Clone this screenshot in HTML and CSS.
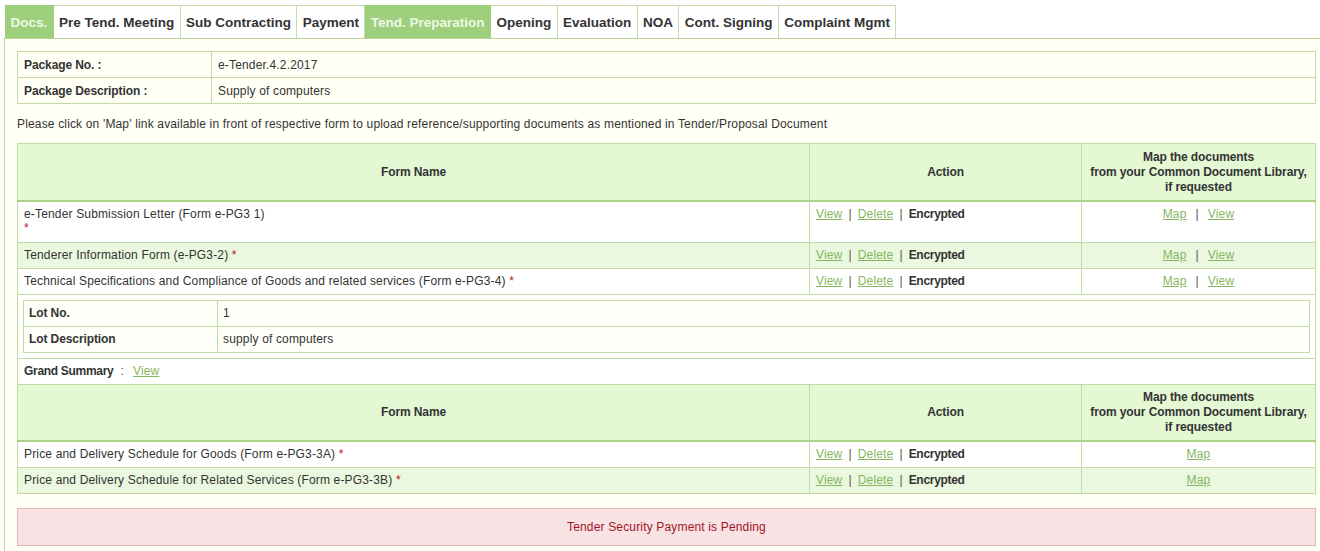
FILE: index.html
```html
<!DOCTYPE html>
<html lang="en">
<head>
  <meta charset="UTF-8">
  <title>Tender Preparation</title>
  <link rel="stylesheet" href="styles.css">
</head>
<body>
  <ul class="tabs">
    <li class="active">Docs.</li>
    <li>Pre Tend. Meeting</li>
    <li>Sub Contracting</li>
    <li>Payment</li>
    <li class="active">Tend. Preparation</li>
    <li>Opening</li>
    <li>Evaluation</li>
    <li>NOA</li>
    <li>Cont. Signing</li>
    <li>Complaint Mgmt</li>
  </ul>

  <div class="content">
    <table class="info">
      <tr><td class="lbl">Package No. :</td><td>e-Tender.4.2.2017</td></tr>
      <tr><td class="lbl">Package Description :</td><td>Supply of computers</td></tr>
    </table>

    <p class="note">Please click on 'Map' link available in front of respective form to upload reference/supporting documents as mentioned in Tender/Proposal Document</p>

    <table class="forms">
      <tr class="head">
        <th class="c-name">Form Name</th>
        <th class="c-act">Action</th>
        <th class="c-map">Map the documents<br>from your Common Document Library,<br>if requested</th>
      </tr>
      <tr class="tall">
        <td>e-Tender Submission Letter (Form e-PG3 1)<br><span class="req">*</span></td>
        <td><a href="#">View</a><span class="sep">|</span><a href="#">Delete</a><span class="sep">|</span><b>Encrypted</b></td>
        <td class="center"><a href="#">Map</a><span class="sep wide">|</span><a href="#">View</a></td>
      </tr>
      <tr class="alt">
        <td>Tenderer Information Form (e-PG3-2) <span class="req">*</span></td>
        <td><a href="#">View</a><span class="sep">|</span><a href="#">Delete</a><span class="sep">|</span><b>Encrypted</b></td>
        <td class="center"><a href="#">Map</a><span class="sep wide">|</span><a href="#">View</a></td>
      </tr>
      <tr>
        <td>Technical Specifications and Compliance of Goods and related services (Form e-PG3-4) <span class="req">*</span></td>
        <td><a href="#">View</a><span class="sep">|</span><a href="#">Delete</a><span class="sep">|</span><b>Encrypted</b></td>
        <td class="center"><a href="#">Map</a><span class="sep wide">|</span><a href="#">View</a></td>
      </tr>
      <tr class="lot">
        <td colspan="3">
          <table class="info lot-info">
            <tr><td class="lbl">Lot No.</td><td>1</td></tr>
            <tr><td class="lbl">Lot Description</td><td>supply of computers</td></tr>
          </table>
        </td>
      </tr>
      <tr>
        <td colspan="3"><b>Grand Summary</b><span class="sep colon">:</span><a href="#">View</a></td>
      </tr>
      <tr class="head short">
        <th class="c-name">Form Name</th>
        <th class="c-act">Action</th>
        <th class="c-map">Map the documents<br>from your Common Document Library,<br>if requested</th>
      </tr>
      <tr>
        <td>Price and Delivery Schedule for Goods (Form e-PG3-3A) <span class="req">*</span></td>
        <td><a href="#">View</a><span class="sep">|</span><a href="#">Delete</a><span class="sep">|</span><b>Encrypted</b></td>
        <td class="center"><a href="#">Map</a></td>
      </tr>
      <tr class="alt">
        <td>Price and Delivery Schedule for Related Services (Form e-PG3-3B) <span class="req">*</span></td>
        <td><a href="#">View</a><span class="sep">|</span><a href="#">Delete</a><span class="sep">|</span><b>Encrypted</b></td>
        <td class="center"><a href="#">Map</a></td>
      </tr>
    </table>

    <div class="alert">Tender Security Payment is Pending</div>
  </div>
</body>
</html>
```

FILE: styles.css
```css
body {
  font-family: "Liberation Sans", Arial, sans-serif;
  font-size: 12px;
  letter-spacing: 0.16px;
  color: #333;
  margin: 0;
  padding-top: 5px;
  background-color: #fff;
  overflow: hidden;
}

b, th, .lbl {
  letter-spacing: -0.1px;
}

.tabs {
  list-style: none;
  margin: 0 0 0 5px;
  padding: 0;
  display: flex;
}

.tabs li {
  height: 33px;
  line-height: 33px;
  padding: 0 5.4px;
  font-size: 13.5px;
  font-weight: bold;
  letter-spacing: 0;
  color: #333;
  border-top: 1px solid #c6dcab;
  border-right: 1px solid #c6dcab;
  box-sizing: border-box;
  background-color: #fff;
}

.tabs li.active {
  background-color: #9dcf7d;
  color: #eef8e6;
  border-color: #9dcf7d;
}

.content {
  margin-left: 4px;
  width: 1340px;
  border-left: 1px solid #b9d49c;
  border-top: 1px solid #b9d49c;
  background-color: #fffff6;
  padding: 12px 0 6px 12px;
  box-sizing: border-box;
  height: 520px;
}

table {
  border-collapse: collapse;
  width: 1299px;
}

td, th {
  border: 1px solid #c2dba5;
  padding: 0 6px;
  text-align: left;
  vertical-align: middle;
}

.info td {
  height: 25px;
  background-color: #fffff6;
}

.info .lbl {
  width: 181px;
  font-weight: bold;
}

.note {
  margin: 13px 0 12px 0;
  line-height: 14px;
}

.forms > tbody > tr > td {
  height: 25px;
  background-color: #fff;
}

.forms > tbody > tr.alt > td {
  background-color: #e9f8de;
}

.forms > tbody > tr.tall > td {
  height: 41px;
  vertical-align: top;
  padding-top: 5px;
  box-sizing: border-box;
}

.forms tr.head th {
  background-color: #e3f8d3;
  height: 56px;
  text-align: center;
  font-weight: bold;
  line-height: 15px;
  border-bottom: 2px solid #a9d286;
}

.forms tr.head.short th {
  height: 55px;
}

.c-name { width: 779px; }
.c-act { width: 259px; }

.forms .center {
  text-align: center;
}

.forms > tbody > tr.lot > td {
  padding: 5px;
  height: auto;
}

.lot-info {
  width: 1287px;
}

.lot-info td {
  height: 25px;
  padding: 0 5px;
  background-color: #fffffa;
}

.lot-info .lbl {
  width: 183px;
}

a {
  color: #86b662;
}

.sep {
  color: #555;
  margin: 0 6px;
}

.sep.wide {
  margin: 0 9px;
}

.sep.colon {
  margin: 0 9px 0 7px;
}

b {
  color: #333;
  letter-spacing: -0.3px;
}

.req {
  color: #c0121e;
}

.alert {
  width: 1299px;
  box-sizing: border-box;
  margin-top: 14px;
  height: 38px;
  line-height: 36px;
  text-align: center;
  color: #9e1526;
  background-color: #f9e2e4;
  border: 1px solid #dbb6b9;
}
```
